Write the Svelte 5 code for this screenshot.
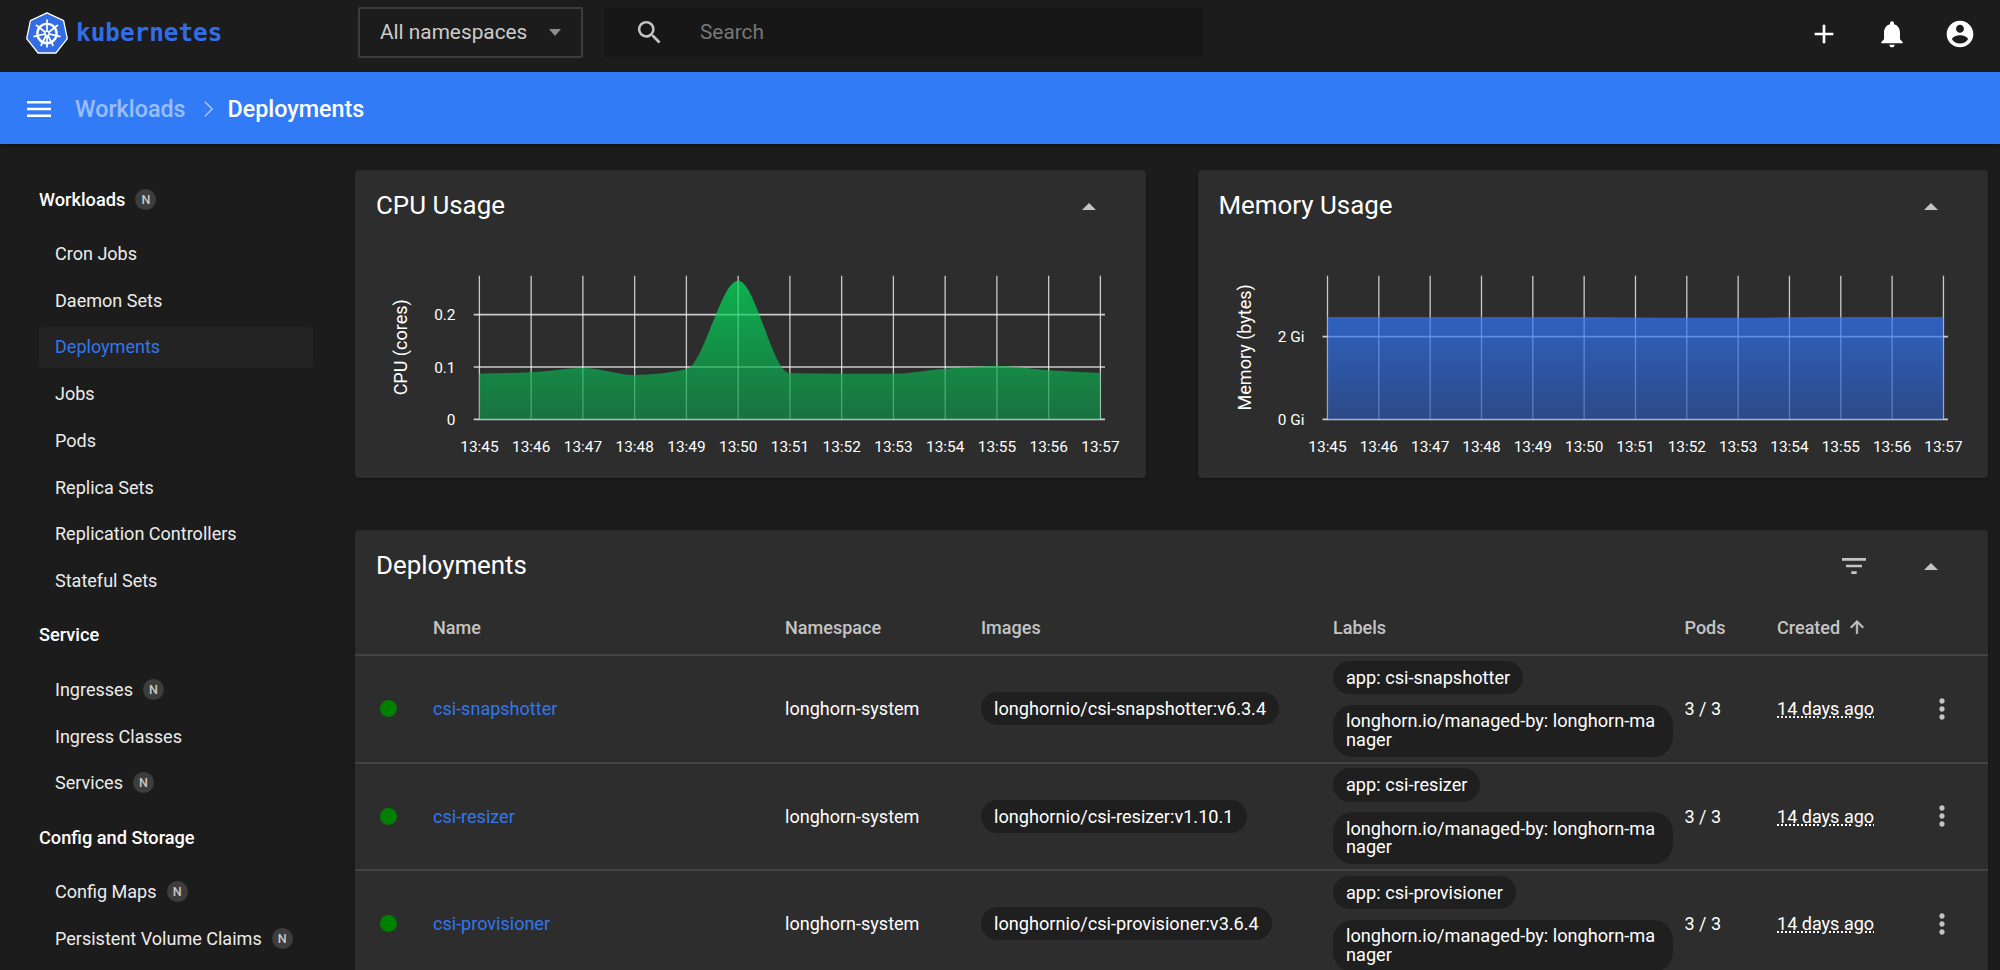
<script>
  const nav = [
    { title: 'Workloads', badge: true, items: [
      { t: 'Cron Jobs' }, { t: 'Daemon Sets' }, { t: 'Deployments', active: true }, { t: 'Jobs' }, { t: 'Pods' },
      { t: 'Replica Sets' }, { t: 'Replication Controllers' }, { t: 'Stateful Sets' } ] },
    { title: 'Service', items: [ { t: 'Ingresses', badge: true }, { t: 'Ingress Classes' }, { t: 'Services', badge: true } ] },
    { title: 'Config and Storage', items: [ { t: 'Config Maps', badge: true }, { t: 'Persistent Volume Claims', badge: true } ] }
  ];
  const rows = [
    { name: 'csi-snapshotter', image: 'longhornio/csi-snapshotter:v6.3.4', app: 'app: csi-snapshotter' },
    { name: 'csi-resizer', image: 'longhornio/csi-resizer:v1.10.1', app: 'app: csi-resizer' },
    { name: 'csi-provisioner', image: 'longhornio/csi-provisioner:v3.6.4', app: 'app: csi-provisioner' }
  ];
  const times = ['13:45','13:46','13:47','13:48','13:49','13:50','13:51','13:52','13:53','13:54','13:55','13:56','13:57'];

  function monotone(xs, ys) {
    const n = xs.length, m = [], t = [];
    for (let i = 0; i < n - 1; i++) m.push((ys[i + 1] - ys[i]) / (xs[i + 1] - xs[i]));
    t[0] = m[0]; t[n - 1] = m[n - 2];
    for (let i = 1; i < n - 1; i++) t[i] = m[i - 1] * m[i] <= 0 ? 0 : 2 * m[i - 1] * m[i] / (m[i - 1] + m[i]);
    let d = `M${xs[0]} ${ys[0]}`;
    for (let i = 0; i < n - 1; i++) {
      const h = (xs[i + 1] - xs[i]) / 3;
      d += `C${xs[i] + h} ${ys[i] + t[i] * h} ${xs[i + 1] - h} ${ys[i + 1] - t[i + 1] * h} ${xs[i + 1]} ${ys[i + 1]}`;
    }
    return d;
  }
  const gridX = (x0, step) => times.map((_, i) => +(x0 + i * step).toFixed(2));

  const cpuX = gridX(124.4, 51.75);
  const cpuY = [113.7, 112.3, 108, 115, 109.3, 20.7, 113.3, 113.7, 113.7, 108.7, 106, 110.3, 113];
  const cpuArea = monotone(cpuX, cpuY) + `L${cpuX[12]} 159.3L${cpuX[0]} 159.3Z`;
  const memX = gridX(129.5, 51.33);
  const memY = [57, 57, 57, 57, 57, 57, 57.6, 57.8, 57.8, 57.3, 57, 57, 57];
  const memArea = monotone(memX, memY) + `L${memX[12]} 159.3L${memX[0]} 159.3Z`;
</script>

<div class="page">
  <header class="top">
    <div class="brand">
      <svg class="logo" viewBox="0 0 42 42" aria-hidden="true">
        <path d="M21 .8 37.6 8.7 41.3 26.6 29.9 41 12.1 41 .7 26.6 4.4 8.7Z" fill="#326de6" stroke="#fff" stroke-width="1.3" stroke-linejoin="round"/>
        <g fill="none" stroke="#fff">
          <circle cx="21" cy="21.5" r="9.6" stroke-width="2.4"/>
          <path stroke-width="1.7" d="M21 7.5V35.5M21 21.5 32 13M21 21.5 34.5 24.6M21 21.5 27.2 34M21 21.5 14.8 34M21 21.5 7.5 24.6M21 21.5 10 13"/>
          <circle cx="21" cy="21.5" r="2.2" fill="#326de6" stroke-width="1.6"/>
        </g>
      </svg>
      <span class="word">kubernetes</span>
    </div>
    <div class="ns"><span>All namespaces</span><i class="caret-down"></i></div>
    <div class="search">
      <svg class="ic-search" viewBox="0 0 24 24"><path fill="#c4c4c4" d="M15.5 14h-.79l-.28-.27A6.47 6.47 0 0 0 16 9.5 6.5 6.5 0 1 0 9.5 16c1.61 0 3.09-.59 4.23-1.57l.27.28v.79l5 4.99L20.49 19l-4.99-5zm-6 0C7.01 14 5 11.99 5 9.5S7.01 5 9.5 5 14 7.01 14 9.5 11.99 14 9.5 14z"/></svg>
      <span>Search</span>
    </div>
    <div class="actions">
      <svg viewBox="0 0 24 24"><path fill="#fff" d="M19 13h-6v6h-2v-6H5v-2h6V5h2v6h6v2z"/></svg>
      <svg viewBox="0 0 24 24"><path fill="#fff" d="M12 22c1.1 0 2-.9 2-2h-4c0 1.1.89 2 2 2zm6-6v-5c0-3.07-1.64-5.64-4.5-6.32V4c0-.83-.67-1.5-1.5-1.5s-1.5.67-1.5 1.5v.68C7.63 5.36 6 7.92 6 11v5l-2 2v1h16v-1l-2-2z"/></svg>
      <svg viewBox="0 0 24 24"><path fill="#fff" d="M12 2C6.48 2 2 6.48 2 12s4.48 10 10 10 10-4.48 10-10S17.52 2 12 2zm0 3c1.66 0 3 1.34 3 3s-1.34 3-3 3-3-1.34-3-3 1.34-3 3-3zm0 14.2a7.2 7.2 0 0 1-6-3.22c.03-1.99 4-3.08 6-3.08 1.99 0 5.97 1.09 6 3.08a7.2 7.2 0 0 1-6 3.22z"/></svg>
    </div>
  </header>

  <div class="crumbs">
    <svg class="burger" viewBox="0 0 24 16"><path fill="#fff" d="M0 0h24v2.4H0zM0 6.8h24v2.4H0zM0 13.6h24V16H0z"/></svg>
    <span class="parent">Workloads</span>
    <svg class="chev" viewBox="0 0 12 20"><path fill="none" stroke="#fff" stroke-opacity=".6" stroke-width="1.6" d="M2 2l8 8-8 8"/></svg>
    <span class="current">Deployments</span>
  </div>

  <div class="body">
    <nav class="side">
      {#each nav as g}
        <div class="grp">{g.title}{#if g.badge}<b class="n">N</b>{/if}</div>
        {#each g.items as it}
          <div class="item" class:active={it.active}>{it.t}{#if it.badge}<b class="n">N</b>{/if}</div>
        {/each}
      {/each}
    </nav>

    <main class="content">
      <div class="charts">
        <section class="card chart">
          <div class="chead"><h2>CPU Usage</h2><i class="caret-up"></i></div>
          <svg class="plot" viewBox="0 0 790 200">
            <defs>
              <linearGradient id="g1" x1="0" y1="20" x2="0" y2="160" gradientUnits="userSpaceOnUse"><stop offset="0" stop-color="#00e85e" stop-opacity=".7"/><stop offset="1" stop-color="#128e47" stop-opacity=".7"/></linearGradient>
            </defs>
            {#each cpuX as x, i}
              <line x1={x} x2={x} y1="15.7" y2="159.3" class="v"/>
              <text x={x} y="192" class="tick" text-anchor="middle">{times[i]}</text>
            {/each}
            {#each [[54.7,'0.2'],[107,'0.1'],[159.3,'0']] as h}
              <line x1="118.7" x2="750" y1={h[0]} y2={h[0]} class="h"/>
              <text x="100.5" y={h[0] + 5.5} class="tick" text-anchor="end">{h[1]}</text>
            {/each}
            <path d={cpuArea} fill="url(#g1)"/>
            <text transform="translate(52 87.3) rotate(-90)" class="axis" text-anchor="middle">CPU (cores)</text>
          </svg>
        </section>
        <section class="card chart">
          <div class="chead"><h2>Memory Usage</h2><i class="caret-up"></i></div>
          <svg class="plot" viewBox="0 0 790 200">
            <defs>
              <linearGradient id="g2" x1="0" y1="57" x2="0" y2="160" gradientUnits="userSpaceOnUse"><stop offset="0" stop-color="#3077ff" stop-opacity=".7"/><stop offset="1" stop-color="#2c56ab" stop-opacity=".7"/></linearGradient>
            </defs>
            {#each memX as x, i}
              <line x1={x} x2={x} y1="15.7" y2="159.3" class="v"/>
              <text x={x} y="192" class="tick" text-anchor="middle">{times[i]}</text>
            {/each}
            {#each [[76.7,'2 Gi'],[159.3,'0 Gi']] as h}
              <line x1="124.5" x2="750" y1={h[0]} y2={h[0]} class="h"/>
              <text x="106.5" y={h[0] + 5.5} class="tick" text-anchor="end">{h[1]}</text>
            {/each}
            <path d={memArea} fill="url(#g2)"/>
            <text transform="translate(53 87.3) rotate(-90)" class="axis" text-anchor="middle">Memory (bytes)</text>
          </svg>
        </section>
      </div>

      <section class="card list">
        <div class="lhead">
          <h2>Deployments</h2>
          <svg class="filter" viewBox="0 0 24 24"><path fill="#c4c4c4" d="M10 18h4v-2h-4v2zM3 6v2h18V6H3zm3 7h12v-2H6v2z"/></svg>
          <i class="caret-up"></i>
        </div>
        <div class="tr th">
          <span></span><span>Name</span><span>Namespace</span><span>Images</span><span>Labels</span><span>Pods</span>
          <span class="created">Created
            <svg viewBox="0 0 24 24"><path fill="#c4c4c4" stroke="#c4c4c4" stroke-width=".6" d="M4 12l1.41 1.41L11 7.83V20h2V7.83l5.58 5.59L20 12l-8-8-8 8z"/></svg>
          </span>
          <span></span>
        </div>
        {#each rows as r}
          <div class="tr">
            <i class="dot"></i>
            <a class="link" href="#top">{r.name}</a>
            <span>longhorn-system</span>
            <div class="chips"><span class="chip">{r.image}</span></div>
            <div class="chips labels">
              <span class="chip">{r.app}</span>
              <span class="chip wrap">longhorn.io/managed-by: longhorn-ma<br/>nager</span>
            </div>
            <span>3 / 3</span>
            <span class="age">14 days ago</span>
            <svg class="more" viewBox="0 0 24 24"><path fill="#c4c4c4" d="M12 8c1.1 0 2-.9 2-2s-.9-2-2-2-2 .9-2 2 .9 2 2 2zm0 2c-1.1 0-2 .9-2 2s.9 2 2 2 2-.9 2-2-.9-2-2-2zm0 6c-1.1 0-2 .9-2 2s.9 2 2 2 2-.9 2-2-.9-2-2-2z"/></svg>
          </div>
        {/each}
      </section>
    </main>
  </div>
</div>

<style>
  :global(body) { margin: 0; background: #1c1c1c; overflow: hidden; }
  .page { width: 2000px; height: 970px; overflow: hidden; background: #1c1c1c; color: #fff; font: 400 18.05px/1.3 Roboto, sans-serif; }

  .top { height: 71px; box-sizing: border-box; padding-bottom: 6px; display: flex; align-items: center; position: relative; }
  .brand { display: flex; align-items: center; width: 358px; padding-left: 26px; box-sizing: border-box; gap: 8px; flex: none; }
  .logo { width: 42px; height: 42px; flex: none; }
  .word { font: 700 24.3px "DejaVu Sans Mono", monospace; color: #326de6; }
  .ns { width: 225px; height: 51px; box-sizing: border-box; border: 2px solid #3d3d3d; border-radius: 2px; display: flex; align-items: center; justify-content: space-between; padding: 0 20px 0 20px; color: #ccc; font-size: 20.8px; flex: none; }
  .caret-down { width: 0; height: 0; border: 6.5px solid transparent; border-top: 7px solid #8c8c8c; border-bottom: 0; }
  .search { margin-left: 21px; width: 599px; height: 49px; background: #171717; border-radius: 2px; display: flex; align-items: center; color: #777; font-size: 20.8px; flex: none; }
  .ic-search { width: 31px; height: 31px; margin-left: 30px; margin-right: 35px; }
  .actions { margin-left: auto; display: flex; gap: 36px; padding-right: 24px; margin-top: 3px; }
  .actions svg { width: 32px; height: 32px; display: block; }

  .crumbs { height: 72px; margin-top: 1px; background: #317cf6; display: flex; align-items: center; padding: 2px 0 0 27px; box-sizing: border-box; box-shadow: 0 2px 4px rgba(0,0,0,.35); font-size: 23.3px; font-weight: 500; position: relative; }
  .burger { width: 24px; height: 16px; margin-right: 24px; }
  .parent { color: rgba(255,255,255,.52); }
  .chev { width: 11px; height: 18px; margin: 0 14px 0 17px; }

  .body { display: flex; height: 826px; }
  .side { width: 355px; flex: none; box-sizing: border-box; padding: 32px 0 0 39px; }
  .grp { height: 46.7px; margin-top: 7.8px; margin-bottom: 7.8px; display: flex; align-items: center; font-weight: 500; font-size: 18.2px; }
  .grp:first-child { margin-top: 0; }
  .item { height: 46.7px; width: 274px; box-sizing: border-box; padding-left: 16px; display: flex; align-items: center; color: #ececec; }
  .item.active { color: #3177ee; position: relative; isolation: isolate; }
  .item.active::before { content: ""; position: absolute; left: 0; right: 0; top: 3.5px; bottom: 3px; background: #232323; border-radius: 4px; z-index: -1; }
  .n { margin-left: 10px; width: 21px; height: 21px; border-radius: 50%; background: #3d3d3d; color: #c8c8c8; font: 500 12.5px/21px Roboto, sans-serif; text-align: center; }

  .content { flex: 1; padding: 26px 12px 0 0; min-width: 0; }
  .charts { display: grid; grid-template-columns: 790.5px 790.5px; column-gap: 52px; margin-bottom: 52px; }
  .card { background: #2d2d2d; border-radius: 4px; box-shadow: 0 1px 3px rgba(0,0,0,.4); }
  .chart { height: 308px; position: relative; }
  .chead { display: flex; align-items: center; justify-content: space-between; height: 72px; padding: 0 50px 0 21px; }
  h2 { margin: 0; font-size: 25.9px; font-weight: 400; line-height: 1; }
  .caret-up { width: 0; height: 0; border: 7px solid transparent; border-bottom: 7px solid #c4c4c4; border-top: 0; flex: none; }
  .plot { position: absolute; left: 0; top: 90px; width: 790px; height: 200px; display: block; overflow: visible; }
  .v { stroke: rgba(255,255,255,.75); stroke-width: 1.3; }
  .h { stroke: rgba(255,255,255,.75); stroke-width: 1.7; }
  .tick { fill: #fff; font: 400 15.4px Roboto, sans-serif; }
  .axis { fill: #fff; font: 400 18px Roboto, sans-serif; }

  .lhead { height: 72px; display: flex; align-items: center; padding: 0 50px 0 21px; }
  .lhead h2 { flex: 1; }
  .filter { width: 32px; height: 32px; margin-right: 54px; }
  .tr { display: grid; grid-template-columns: 78px 352px 196px 352px 351.5px 92.5px 149px 62px; height: 107.5px; box-sizing: border-box; align-items: center; border-top: 2px solid #434343; }
  .tr > :first-child { margin-left: 25px; }
  .tr.th { height: 51px; border-top: 0; color: #c4c4c4; font-weight: 500; margin-bottom: 1px; }
  .created { display: flex; align-items: center; gap: 7px; }
  .created svg { width: 20px; height: 20px; }
  .dot { width: 17px; height: 17px; border-radius: 50%; background: #008000; display: block; }
  .link { color: #3177ee; text-decoration: none; }
  .chips { display: flex; flex-direction: column; align-items: flex-start; gap: 10.6px; }
  .chip { background: #1f1f1f; border-radius: 17px; padding: 0 13px; line-height: 33.4px; height: 33.4px; white-space: nowrap; font-size: 18.15px; }
  .chip.wrap { height: 52px; line-height: 18.3px; padding: 7.5px 13px; box-sizing: border-box; width: 340px; border-radius: 20px; }
  .age { text-decoration: underline dotted; text-underline-offset: 2px; justify-self: start; }
  .more { width: 32px; height: 32px; }
</style>
